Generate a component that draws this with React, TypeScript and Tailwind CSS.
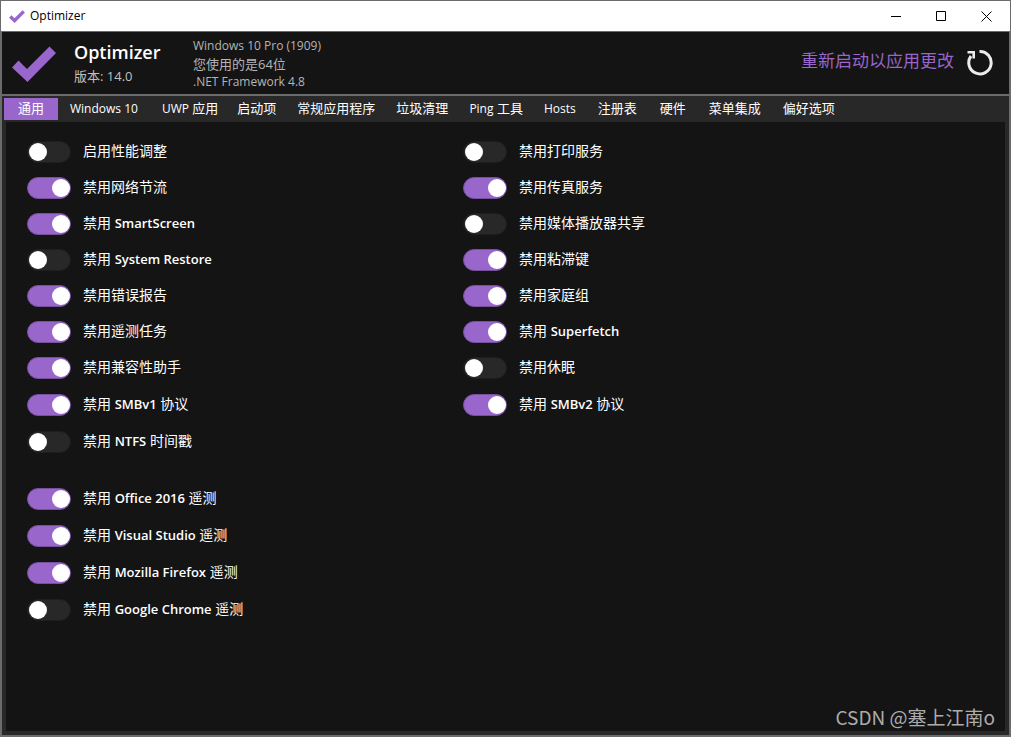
import { useState } from 'react'

const tabs = [
  { name: '通用', style: 'w-[54px]' },
  { name: 'Windows 10', style: 'px-[11px]' },
  { name: 'UWP 应用', style: 'pl-3 pr-2' },
  { name: '启动项', style: 'px-[10px]' },
  { name: '常规应用程序', style: 'px-[10px]' },
  { name: '垃圾清理', style: 'px-[10px]' },
  { name: 'Ping 工具', style: 'px-[10px]' },
  { name: 'Hosts', style: 'px-[10px]' },
  { name: '注册表', style: 'px-[11px]' },
  { name: '硬件', style: 'px-[11px]' },
  { name: '菜单集成', style: 'px-[11px]' },
  { name: '偏好选项', style: 'px-[10px]' },
]

const systemOptions = [
  { id: 'performance', label: '启用性能调整', on: false },
  { id: 'throttling', label: '禁用网络节流', on: true },
  { id: 'smartscreen', label: '禁用 SmartScreen', on: true },
  { id: 'restore', label: '禁用 System Restore', on: false },
  { id: 'error-report', label: '禁用错误报告', on: true },
  { id: 'telemetry-tasks', label: '禁用遥测任务', on: true },
  { id: 'compat', label: '禁用兼容性助手', on: true },
  { id: 'smb1', label: '禁用 SMBv1 协议', on: true },
  { id: 'ntfs', label: '禁用 NTFS 时间戳', on: false },
]

const appOptions = [
  { id: 'office', label: '禁用 Office 2016 遥测', on: true },
  { id: 'vs', label: '禁用 Visual Studio 遥测', on: true },
  { id: 'firefox', label: '禁用 Mozilla Firefox 遥测', on: true },
  { id: 'chrome', label: '禁用 Google Chrome 遥测', on: false },
]

const serviceOptions = [
  { id: 'print', label: '禁用打印服务', on: false },
  { id: 'fax', label: '禁用传真服务', on: true },
  { id: 'media', label: '禁用媒体播放器共享', on: false },
  { id: 'sticky', label: '禁用粘滞键', on: true },
  { id: 'homegroup', label: '禁用家庭组', on: true },
  { id: 'superfetch', label: '禁用 Superfetch', on: true },
  { id: 'hibernation', label: '禁用休眠', on: false },
  { id: 'smb2', label: '禁用 SMBv2 协议', on: true },
]

// latin words are bolder and a bit smaller than the chinese around them
function MixedText({ text, latin }: { text: string; latin: string }) {
  return (
    <>
      {text.split(/([\x21-\x7e]+(?: [\x21-\x7e]+)*)/).map((part, i) =>
        i % 2 ? (
          <span key={i} className={latin}>{part}</span>
        ) : (
          part
        )
      )}
    </>
  )
}

function CheckLogo({ className }: { className: string }) {
  return (
    <svg className={className} viewBox="0 0 44 36" fill="#9966cc" aria-hidden="true">
      <path d="M0 21.5L6.5 14.5L15 23L37.5 .5L44 7L15.5 36Z" />
    </svg>
  )
}

function Toggle({ id, label, on }: { id: string; label: string; on: boolean }) {
  return (
    <div className="flex items-center gap-3 h-full">
      <input
        id={id}
        type="checkbox"
        role="switch"
        defaultChecked={on}
        className="appearance-none flex items-center shrink-0 w-11 h-[22px] rounded-full border border-[#1e1e1e] bg-[#282828] checked:border-[#75509b] checked:bg-[#9966cc] before:block before:size-[18px] before:rounded-full before:bg-white before:translate-x-px checked:before:translate-x-6"
      />
      <label htmlFor={id} className="pb-0.5 text-sm leading-5 whitespace-pre">
        <MixedText text={label} latin="text-[13px] font-semibold" />
      </label>
    </div>
  )
}

function ToggleColumn({ items }: { items: typeof systemOptions }) {
  return (
    <ul>
      {items.map((item, i) => (
        <li key={item.id} className={i < 7 ? 'h-9' : 'h-[37px]'}>
          <Toggle {...item} />
        </li>
      ))}
    </ul>
  )
}

function App() {
  const [active, setActive] = useState('通用')

  return (
    <div className="relative min-h-screen flex flex-col bg-[#6b6b6b] text-white font-['Open_Sans','Noto_Sans_CJK_SC',sans-serif]">
      {/* window title bar */}
      <div className="m-px h-[30px] flex items-center bg-white text-black">
        <CheckLogo className="ml-2 w-4 h-[13px]" />
        <span className="ml-[5px] text-xs">Optimizer</span>
        <div className="ml-auto mr-px flex h-full">
          <button aria-label="Minimize" className="w-[45px] flex items-center justify-center">
            <svg className="size-[11px]" viewBox="0 0 11 11" stroke="currentColor" fill="none">
              <path d="M0 5.5H10" />
            </svg>
          </button>
          <button aria-label="Maximize" className="w-[45px] flex items-center justify-center">
            <svg className="size-[11px]" viewBox="0 0 11 11" stroke="currentColor" fill="none">
              <path d="M.5 .5H9.5V9.5H.5Z" />
            </svg>
          </button>
          <button aria-label="Close" className="w-[45px] flex items-center justify-center">
            <svg className="size-[11px]" viewBox="0 0 11 11" stroke="currentColor" fill="none">
              <path d="M.5 .5L10.5 10.5M10.5 .5L.5 10.5" />
            </svg>
          </button>
        </div>
      </div>

      <div className="mx-0.5 mb-0.5 flex-1 flex flex-col bg-[#282828]">
        <header className="h-[62px] px-[10px] flex items-center bg-[#141414]">
          <CheckLogo className="mt-0.5 w-11 h-9" />
          <div className="ml-[18px] min-w-[119px]">
            <h1 className="text-lg leading-7 font-semibold">Optimizer</h1>
            <p className="text-[13px] leading-5 pb-0.5 text-[#c0c0c0]">版本: 14.0</p>
          </div>
          <div className="pt-0.5 text-xs leading-[18px] font-medium text-[#b4b4b4]">
            <p>Windows 10 Pro (1909)</p>
            <p className="text-[13px] font-normal">您使用的是64位</p>
            <p>.NET Framework 4.8</p>
          </div>
          <a href="#restart" className="ml-auto mb-1 text-[17px] leading-6 text-[#9966cc]">
            重新启动以应用更改
          </a>
          <button aria-label="重新启动" className="ml-3 mr-[5px] mb-0.5">
            <svg className="size-7" viewBox="0 0 28 28" fill="none" stroke="#ececec" strokeWidth="3">
              <path d="M13.5 3.5A11.2 11.2 0 1 1 5 8" />
              <path d="M1.5 4.3H7.7V10.5" strokeWidth="2.6" />
            </svg>
          </button>
        </header>

        {/* tabs */}
        <div role="tablist" className="border-t-2 border-[#6b6b6b] h-7 pl-0.5 pt-0.5 flex gap-px text-[13px]">
          {tabs.map((tab) => (
            <button
              key={tab.name}
              role="tab"
              aria-selected={tab.name === active}
              onClick={() => setActive(tab.name)}
              className={`h-[22px] leading-[20px] pb-0.5 whitespace-pre ${tab.style} ${tab.name === active ? 'bg-[#9966cc]' : ''}`}
            >
              <MixedText text={tab.name} latin="text-xs font-medium" />
            </button>
          ))}
        </div>

        <main className="mx-1 mb-1 flex-1 pl-[21px] pt-3 pb-6 grid grid-cols-[436px_1fr] bg-[#141414]">
          <div>
            <ToggleColumn items={systemOptions} />
            <ul className="mt-5">
              {appOptions.map((item) => (
                <li key={item.id} className="h-[37px]">
                  <Toggle {...item} />
                </li>
              ))}
            </ul>
          </div>
          <ToggleColumn items={serviceOptions} />
        </main>
      </div>

      <span className="absolute right-4 bottom-1.5 text-[19px] leading-7 text-[#acacac] font-['Noto_Sans_CJK_SC',sans-serif]">
        CSDN @塞上江南o
      </span>
    </div>
  )
}

export default App
